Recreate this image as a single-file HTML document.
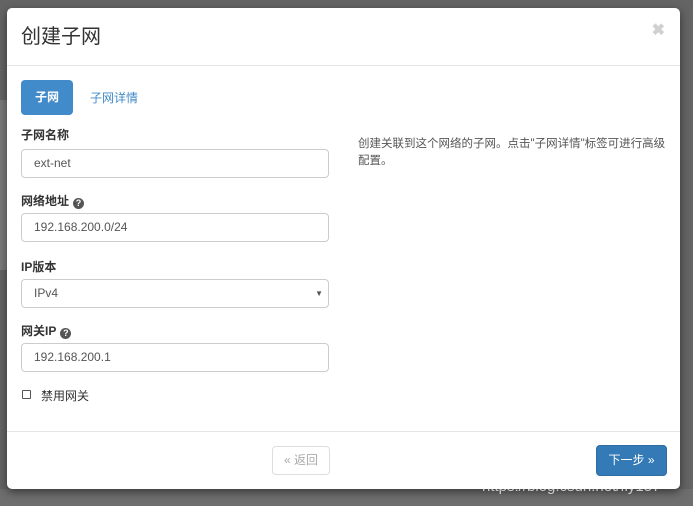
<!DOCTYPE html>
<html><head><meta charset="utf-8"><style>
*{box-sizing:border-box;margin:0;padding:0}
body{width:693px;height:506px;overflow:hidden;background:#646464;font-family:"Liberation Sans","Noto Sans CJK SC",sans-serif;position:relative;font-size:12px;color:#333}
.bgl{position:absolute;left:0;top:100px;width:8px;height:170px;background:#7a7a7a}
.bgb{position:absolute;left:0;top:489px;width:693px;height:17px;background:#6e6e6e}
.modal{position:absolute;left:7px;top:8px;width:673px;height:481px;background:#fff;border-radius:5px;box-shadow:0 3px 9px rgba(0,0,0,.5)}
.hd{position:absolute;left:0;top:0;width:100%;height:58px;border-bottom:1px solid #e5e5e5}
.hd h1{position:absolute;left:14px;top:16px;font-size:20px;font-weight:normal;color:#333;line-height:26px}
.x{position:absolute;right:15px;top:12px;font-size:16px;font-weight:bold;color:#d0d0d0}
.tab{position:absolute;left:14px;top:72px;width:52px;height:35px;background:#428bca;border-radius:4px;color:#fff;font-weight:bold;text-align:center;line-height:35px;font-size:12px}
.tab2{position:absolute;left:83px;top:81px;color:#428bca;font-size:12px}
.lb{position:absolute;left:14px;font-weight:bold;font-size:12px;color:#333}
.q{display:inline-block;width:11px;height:11px;border-radius:50%;background:#555;color:#fff;font-size:9px;text-align:center;line-height:11px;margin-left:4px;vertical-align:-1px}
.in{position:absolute;left:14px;width:308px;height:29px;border:1px solid #ccc;border-radius:4px;padding-left:12px;line-height:27px;font-size:12px;color:#555}
.help{position:absolute;left:351px;top:128px;width:312px;font-size:11.5px;line-height:17px;color:#555}
.ft{position:absolute;left:0;top:423px;width:100%;border-top:1px solid #e5e5e5}
.back{position:absolute;left:265px;top:438px;width:58px;height:29px;border:1px solid #ddd;border-radius:4px;color:#aaa;text-align:center;line-height:27px;font-size:12px}
.next{position:absolute;left:589px;top:437px;width:71px;height:31px;background:#337ab7;border:1px solid #2e6da4;border-radius:4px;color:#fff;text-align:center;line-height:29px;font-size:12px}
.wm{position:absolute;left:482px;top:478px;color:rgba(255,255,255,.7);font-size:15px}
</style></head><body>
<div class="bgl"></div><div class="bgb"></div>
<div class="modal">
<div class="hd"><h1>创建子网</h1><span class="x">✖</span></div>
<div class="tab">子网</div><div class="tab2">子网详情</div>
<div class="lb" style="top:118px">子网名称</div>
<div class="in" style="top:141px">ext-net</div>
<div class="lb" style="top:184px">网络地址<span class="q">?</span></div>
<div class="in" style="top:205px">192.168.200.0/24</div>
<div class="lb" style="top:250px">IP版本</div>
<div class="in" style="top:271px">IPv4<span style="position:absolute;right:5px;font-size:8px;color:#555">▼</span></div>
<div class="lb" style="top:314px">网关IP<span class="q">?</span></div>
<div class="in" style="top:335px">192.168.200.1</div>
<div style="position:absolute;left:15px;top:382px;width:9px;height:9px;border:1px solid #555;border-radius:1px"></div>
<div style="position:absolute;left:34px;top:379px;font-size:12px;color:#333">禁用网关</div>
<div class="help">创建关联到这个网络的子网。点击"子网详情"标签可进行高级配置。</div>
<div class="ft"></div>
<div class="back">« 返回</div>
<div class="next">下一步 »</div>
</div>
<div class="wm">https://blog.csdn.net/fly157</div>
</body></html>
